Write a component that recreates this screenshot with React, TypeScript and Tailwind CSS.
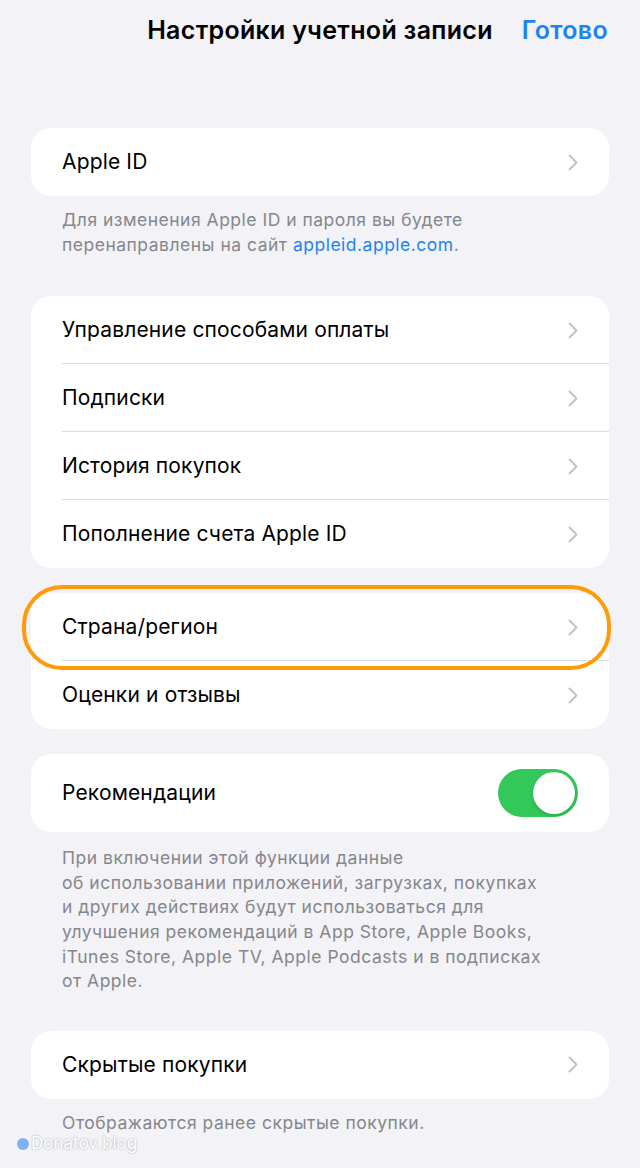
import React from 'react';

// Account settings sheet: grouped inset list, iOS style
const font = { fontFamily: 'Inter, "Noto Sans", sans-serif' };

const Chevron = () => (
  <svg width="10" height="17" viewBox="0 0 10 17" fill="none" className="shrink-0">
    <path d="M1.5 1.5L8.5 8.5L1.5 15.5" stroke="#c4c4c8" strokeWidth="2" strokeLinecap="round" strokeLinejoin="round" />
  </svg>
);

type RowProps = { label: string; divider?: boolean; tall?: boolean; children?: React.ReactNode };

const Row = ({ label, divider, tall, children }: RowProps) => (
  <div className={`relative flex items-center pl-[31px] pr-[31px] ${tall ? 'h-[78px]' : 'h-[68px]'}`}>
    <span className="flex-1 text-[21px] text-black tracking-[0.15px]">{label}</span>
    {children ?? <Chevron />}
    {divider && <div className="absolute bottom-0 left-[31px] right-0 h-px bg-[#dcdce0]" />}
  </div>
);

const Card = ({ children, className = '' }: { children: React.ReactNode; className?: string }) => (
  <div className={`rounded-[20px] bg-white ${className}`}>{children}</div>
);

const Note = ({ children, className = '' }: { children: React.ReactNode; className?: string }) => (
  <p className={`px-[31px] text-[17.5px] leading-[24.6px] text-[#86868b] tracking-[0.5px] ${className}`}>{children}</p>
);

const Toggle = () => (
  <div className="flex h-[48px] w-[80px] items-center justify-end rounded-full bg-[#34c759] p-[3px]">
    <div className="h-[42px] w-[42px] rounded-full bg-white shadow-[0_2px_4px_rgba(0,0,0,0.15)]" />
  </div>
);

export default function App() {
  return (
    <div className="relative min-h-[1168px] w-[640px] overflow-hidden bg-[#f2f2f7]" style={font}>
      {/* navigation bar */}
      <div className="relative flex h-[62px] items-center justify-center">
        <span className="text-[25px] font-semibold text-black tracking-[0.3px]">Настройки учетной записи</span>
        <span className="absolute right-[32px] text-[25px] font-semibold text-[#1a84f0] tracking-[0.3px]">Готово</span>
      </div>

      <div className="px-[31px] pt-[66px]">
        <Card>
          <Row label="Apple ID" />
        </Card>
        <Note className="pt-[12px]">
          Для изменения Apple ID и пароля вы будете
          <br />
          перенаправлены на сайт <span className="text-[#1a84f0]">appleid.apple.com</span>.
        </Note>

        <Card className="mt-[39px]">
          <Row label="Управление способами оплаты" divider />
          <Row label="Подписки" divider />
          <Row label="История покупок" divider />
          <Row label="Пополнение счета Apple ID" />
        </Card>

        <Card className="relative mt-[25px]">
          <div className="relative">
            <Row label="Страна/регион" divider />
            {/* highlight ring around the country row */}
            <div className="pointer-events-none absolute -left-[9px] -right-[2px] -top-[8px] -bottom-[9px] rounded-[40px] border-[4px] border-[#ff9a0a]" />
          </div>
          <Row label="Оценки и отзывы" />
        </Card>

        <Card className="mt-[25px]">
          <Row label="Рекомендации" tall>
            <Toggle />
          </Row>
        </Card>
        <Note className="pt-[14px]">
          При включении этой функции данные
          <br />
          об использовании приложений, загрузках, покупках
          <br />
          и других действиях будут использоваться для
          <br />
          улучшения рекомендаций в App Store, Apple Books,
          <br />
          iTunes Store, Apple TV, Apple Podcasts и в подписках
          <br />
          от Apple.
        </Note>

        <Card className="mt-[37px]">
          <Row label="Скрытые покупки" />
        </Card>
        <Note className="pt-[12px]">Отображаются ранее скрытые покупки.</Note>
      </div>

      {/* watermark */}
      <div className="absolute left-[17px] top-[1131px] flex items-center gap-[2px]">
        <span className="h-[12px] w-[12px] rounded-full bg-[#7fb2f5]" />
        <span className="text-[17px] text-white [text-shadow:0_0_2px_rgba(0,0,0,0.35)]">Donatov.blog</span>
      </div>
    </div>
  );
}
